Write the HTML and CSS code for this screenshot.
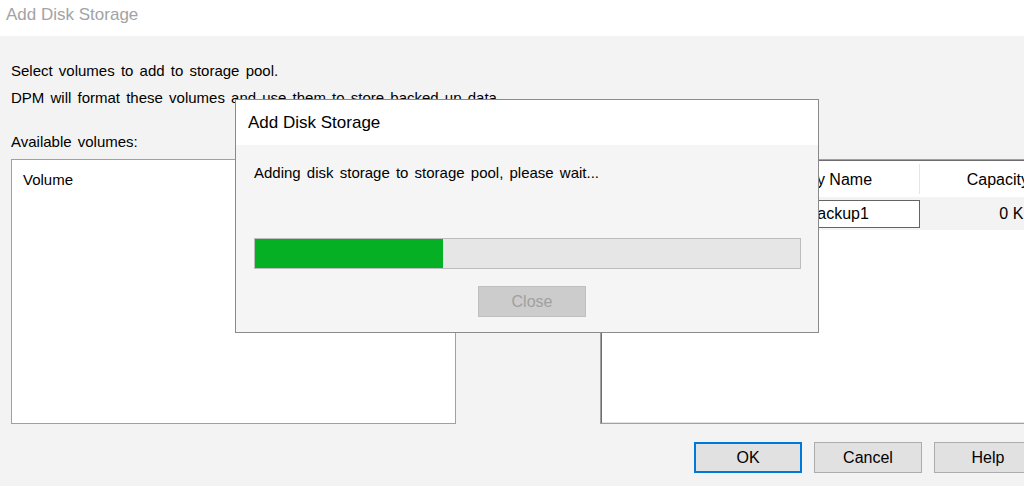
FILE: index.html
```html
<!DOCTYPE html>
<html>
<head>
  <title>Add Disk Storage</title>
  <link rel="stylesheet" href="styles.css">
</head>
<body>
  <div class="window">
    <div class="titlebar">Add Disk Storage</div>
    <div class="content">
      <p class="intro">Select volumes to add to storage pool.</p>
      <p class="intro">DPM will format these volumes and use them to store backed up data.</p>

      <div class="lists">
        <div class="column left">
          <div class="label">Available volumes:</div>
          <div class="listbox">
            <div class="list-head">Volume</div>
          </div>
        </div>
        <div class="column right">
          <div class="label">Selected volumes:</div>
          <div class="gridbox">
            <div class="grid-head">
              <div class="cell">Volume</div>
              <div class="cell">Friendly Name</div>
              <div class="cell num">Capacity</div>
            </div>
            <div class="grid-row">
              <div class="cell"></div>
              <div class="cell"><span class="textbox">DPMBackup1</span></div>
              <div class="cell num">0 KB</div>
            </div>
          </div>
        </div>
      </div>

      <div class="buttons">
        <button class="btn default">OK</button>
        <button class="btn">Cancel</button>
        <button class="btn">Help</button>
      </div>
    </div>
  </div>

  <!-- progress dialog on top of the main window -->
  <div class="modal">
    <div class="modal-title">Add Disk Storage</div>
    <div class="modal-body">
      <p class="status">Adding disk storage to storage pool, please wait...</p>
      <div class="progress">
        <div class="progress-fill" style="width: 34.5%"></div>
      </div>
      <button class="btn close" disabled>Close</button>
    </div>
  </div>
</body>
</html>
```

FILE: styles.css
```css
body {
  margin: 0;
  overflow: hidden;
  font-family: "Liberation Sans", Arial, sans-serif;
  font-size: 15px;
  color: #000;
  background-color: #f3f3f3;
}

.window {
  width: 1053px;
  height: 486px;
  background-color: #f3f3f3;
}

.titlebar {
  height: 36px;
  padding-left: 6px;
  line-height: 30px;
  font-size: 17px;
  color: #a3a3a3;
  background-color: #fff;
}

.content {
  padding: 21px 11px 0 11px;
}

.intro {
  margin: 0;
  line-height: 27px;
  word-spacing: 2px;
}

.lists {
  display: flex;
  justify-content: space-between;
  margin-top: 17px;
}

.column.left {
  width: 445px;
}

.column.right {
  width: 442px;
}

.label {
  line-height: 27px;
  margin-bottom: 4px;
  word-spacing: 2px;
}

.listbox {
  height: 263px;
  border: 1px solid #a0a0a0;
  background-color: #fff;
}

.list-head {
  padding: 10px 11px 0 11px;
  line-height: 20px;
}

.gridbox {
  height: 263px;
  border: 1px solid #a0a0a0;
  box-shadow: inset 1px 1px 0 #6d6d6d, inset -1px -1px 0 #e3e3e3;
  background-color: #fff;
}

.grid-head,
.grid-row {
  display: grid;
  grid-template-columns: 159px 160px 1fr;
}

.grid-head {
  height: 36px;
  margin-top: 1px;
  align-items: center;
}

.grid-head .cell {
  height: 30px;
  line-height: 31px;
  padding: 0 12px 0 8px;
  font-size: 16px;
  border-right: 1px solid #e5e5e5;
  box-sizing: border-box;
}

.grid-head .cell:last-child {
  border-right: none;
}

.grid-row {
  height: 33px;
  align-items: center;
  background-color: #f3f3f3;
}

.grid-row .cell {
  padding: 0 7px 0 11px;
  line-height: 20px;
  font-size: 16px;
}

.grid-row .cell:nth-child(2) {
  padding: 0;
}

.textbox {
  display: block;
  height: 26px;
  line-height: 26px;
  padding-left: 10px;
  border: 1px solid #646464;
  background-color: #fff;
}

.num {
  text-align: right;
}

.buttons {
  display: flex;
  justify-content: flex-end;
  gap: 12px;
  margin-top: 18px;
}

.btn {
  width: 108px;
  height: 31px;
  font-family: "Liberation Sans", Arial, sans-serif;
  font-size: 16px;
  color: #000;
  background-color: #e1e1e1;
  border: 1px solid #adadad;
  padding: 0;
}

.btn.default {
  border: 2px solid #0078d7;
}

.modal {
  position: absolute;
  left: 235px;
  top: 99px;
  width: 582px;
  height: 232px;
  border: 1px solid #8a8a8a;
  background-color: #f5f5f5;
}

.modal-title {
  height: 45px;
  display: flex;
  align-items: center;
  padding-left: 12px;
  font-size: 17px;
  background-color: #fff;
}

.modal-body {
  padding: 18px 17px 0 18px;
}

.status {
  margin: 0;
  line-height: 20px;
  word-spacing: 2px;
}

.progress {
  margin-top: 55px;
  height: 29px;
  border: 1px solid #bcbcbc;
  background-color: #e6e6e6;
}

.progress-fill {
  height: 100%;
  background-color: #06b025;
}

.btn.close {
  display: block;
  margin: 17px 0 0 224px;
  color: #a0a0a0;
  background-color: #cccccc;
  border-color: #bfbfbf;
}
```
